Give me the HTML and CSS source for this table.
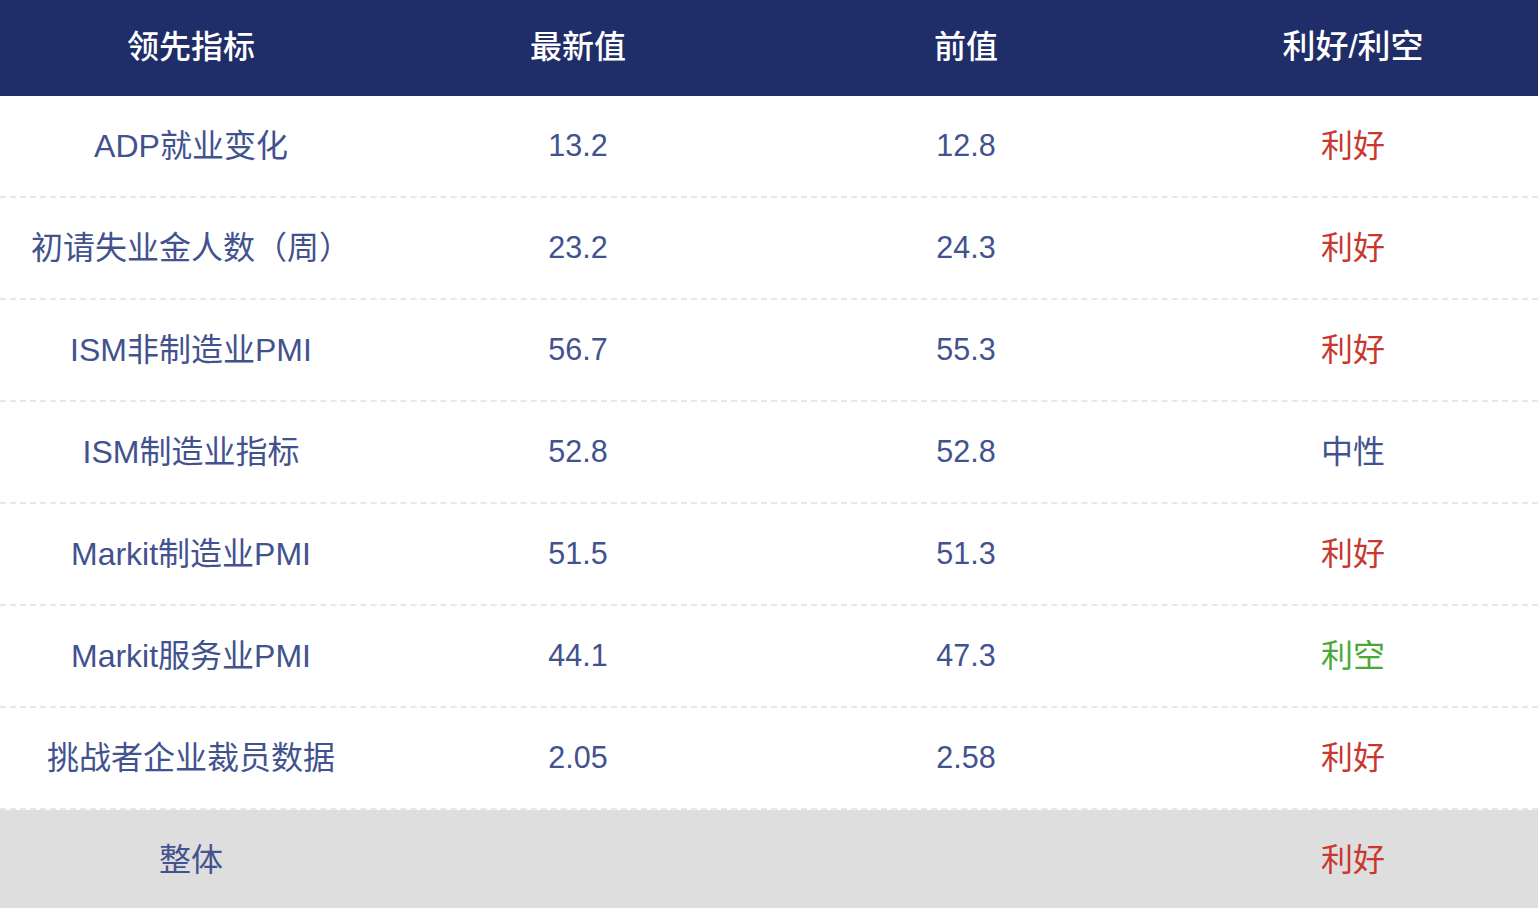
FILE: index.html
```html
<!DOCTYPE html>
<html lang="zh">
<head>
<meta charset="utf-8">
<link rel="stylesheet" href="styles.css">
</head>
<body>
<div class="table">
  <div class="row head">
    <div class="cell">领先指标</div><div class="cell">最新值</div><div class="cell">前值</div><div class="cell">利好/利空</div>
  </div>
  <div class="row">
    <div class="cell">ADP就业变化</div><div class="cell num">13.2</div><div class="cell num">12.8</div><div class="cell red">利好</div>
  </div>
  <div class="row">
    <div class="cell">初请失业金人数（周）</div><div class="cell num">23.2</div><div class="cell num">24.3</div><div class="cell red">利好</div>
  </div>
  <div class="row">
    <div class="cell">ISM非制造业PMI</div><div class="cell num">56.7</div><div class="cell num">55.3</div><div class="cell red">利好</div>
  </div>
  <div class="row">
    <div class="cell">ISM制造业指标</div><div class="cell num">52.8</div><div class="cell num">52.8</div><div class="cell">中性</div>
  </div>
  <div class="row">
    <div class="cell">Markit制造业PMI</div><div class="cell num">51.5</div><div class="cell num">51.3</div><div class="cell red">利好</div>
  </div>
  <div class="row">
    <div class="cell">Markit服务业PMI</div><div class="cell num">44.1</div><div class="cell num">47.3</div><div class="cell green">利空</div>
  </div>
  <div class="row">
    <div class="cell">挑战者企业裁员数据</div><div class="cell num">2.05</div><div class="cell num">2.58</div><div class="cell red">利好</div>
  </div>
  <div class="row total">
    <div class="cell">整体</div><div class="cell"></div><div class="cell"></div><div class="cell red">利好</div>
  </div>
</div>
</body>
</html>
```

FILE: styles.css
```css
html, body {
  margin: 0;
  padding: 0;
  background: #ffffff;
}
body {
  font-family: "Liberation Sans", "Noto Sans CJK SC", sans-serif;
  color: #42528f;
}
.table {
  width: 1538px;
}
.row {
  display: grid;
  grid-template-columns: 382px 392px 384px 380px;
  height: 102px;
  border-bottom: 2px dashed #e8e8e8;
  box-sizing: border-box;
  font-size: 32px;
  padding-bottom: 6px;
}
.cell {
  display: flex;
  align-items: center;
  justify-content: center;
  white-space: nowrap;
}
.cell:nth-child(4) {
  padding-left: 10px;
}
.num {
  font-size: 30.5px;
  padding-top: 5px;
}
.head {
  height: 96px;
  background: #1f2d69;
  color: #ffffff;
  font-size: 32px;
  font-weight: 500;
  border-bottom: none;
  padding-bottom: 9px;
}
.head .cell:nth-child(4) {
  font-size: 33px;
}
.total {
  height: 100px;
  background: #dedede;
  border-bottom: none;
}
.red { color: #c9372f; }
.green { color: #4aa936; }
```
